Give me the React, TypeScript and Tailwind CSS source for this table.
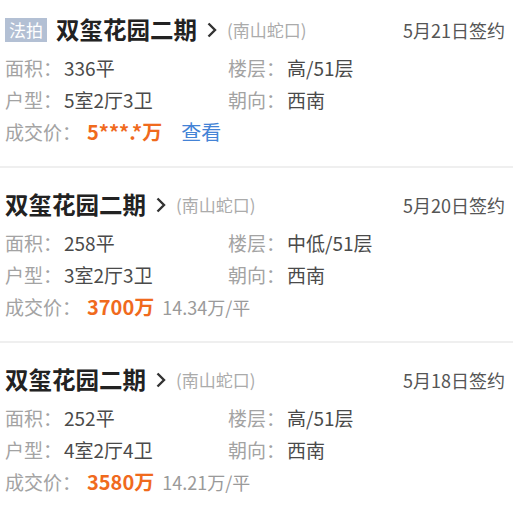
import React from 'react';

type Deal = {
  id: number;
  auction?: boolean;
  name: string;
  area: string;
  date: string;
  size: string;
  floor: string;
  layout: string;
  facing: string;
  price: string;
  unit?: string;
};

const deals: Deal[] = [
  {
    id: 1,
    auction: true,
    name: '双玺花园二期',
    area: '(南山蛇口)',
    date: '5月21日签约',
    size: '336平',
    floor: '高/51层',
    layout: '5室2厅3卫',
    facing: '西南',
    price: '5***.*万',
  },
  {
    id: 2,
    name: '双玺花园二期',
    area: '(南山蛇口)',
    date: '5月20日签约',
    size: '258平',
    floor: '中低/51层',
    layout: '3室2厅3卫',
    facing: '西南',
    price: '3700万',
    unit: '14.34万/平',
  },
  {
    id: 3,
    name: '双玺花园二期',
    area: '(南山蛇口)',
    date: '5月18日签约',
    size: '252平',
    floor: '高/51层',
    layout: '4室2厅4卫',
    facing: '西南',
    price: '3580万',
    unit: '14.21万/平',
  },
];

function Field({ label, value }: { label: string; value: string }) {
  return (
    <div className="flex items-center h-[32px]">
      <span className="text-[#a3a3a3]">{label}：</span>
      <span className="ml-[2px] text-[#4a4a4a]">{value}</span>
    </div>
  );
}

function DealCard({ deal, first }: { deal: Deal; first: boolean }) {
  return (
    <div className={`${first ? 'pt-[15px]' : 'pt-[22px]'} pb-[18px] pl-[5px] pr-[8px]`}>
      <div className="flex items-center h-[30px]">
        {deal.auction && (
          <span className="mr-[9px] flex h-[24px] w-[42px] items-center justify-center bg-[#b3c0d4] text-[17px] text-white">
            法拍
          </span>
        )}
        <span className="text-[23.5px] font-bold text-[#222]">{deal.name}</span>
        <svg className="ml-[9px] mr-[9px]" width="12" height="18" viewBox="0 0 12 18" fill="none">
          <path d="M2.5 2.5l6.5 6.5L2.5 15.5" stroke="#333" strokeWidth="2.4" />
        </svg>
        <span className="text-[17px] text-[#ababab]">{deal.area}</span>
        <span className="ml-auto text-[18px] text-[#555]">{deal.date}</span>
      </div>
      <div className="mt-[7px] grid grid-cols-[223px_1fr] text-[19px]">
        <Field label="面积" value={deal.size} />
        <Field label="楼层" value={deal.floor} />
        <Field label="户型" value={deal.layout} />
        <Field label="朝向" value={deal.facing} />
        <div className="col-span-2 flex items-center h-[32px]">
          <span className="text-[#a3a3a3]">成交价：</span>
          <span className="ml-[6px] text-[20px] font-bold text-[#f06a1d]">{deal.price}</span>
          {deal.unit ? (
            <span className="ml-[8px] text-[18px] text-[#9a9a9a]">{deal.unit}</span>
          ) : (
            <span className="ml-[19px] text-[20px] text-[#4483d6]">查看</span>
          )}
        </div>
      </div>
    </div>
  );
}

export default function App() {
  return (
    <div
      className="w-[513px] h-[509px] overflow-hidden bg-white"
      style={{ fontFamily: '"Noto Sans CJK SC", "Noto Sans", sans-serif' }}
    >
      {deals.map((d, i) => (
        <div key={d.id} className={i > 0 ? 'border-t-2 border-[#efefef]' : ''}>
          <DealCard deal={d} first={i === 0} />
        </div>
      ))}
    </div>
  );
}
